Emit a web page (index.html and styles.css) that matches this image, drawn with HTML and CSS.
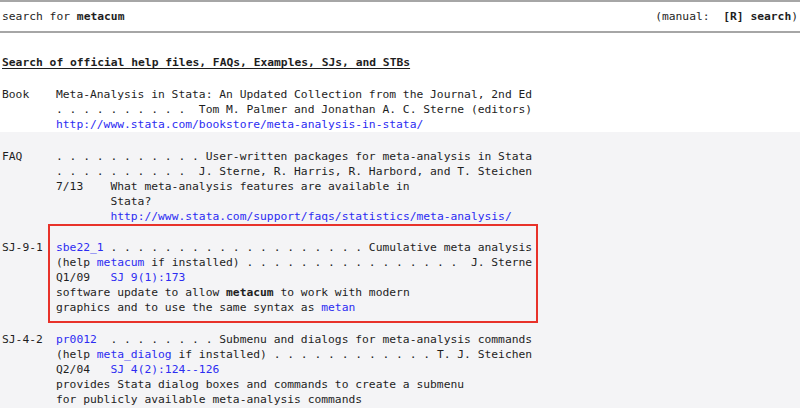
FILE: index.html
```html
<!DOCTYPE html>
<html lang="en">
<head>
<meta charset="utf-8">
<title>search for metacum</title>
<link rel="stylesheet" href="styles.css">
</head>
<body>
<div class="top">
  <header class="searchbar">
    <span class="ln">search for <b>metacum</b></span>
    <span class="ln">(manual:  <b>[R] search</b>)</span>
  </header>
  <h1 class="heading">Search of official help files, FAQs, Examples, SJs, and STBs</h1>
  <div class="entry">
    <div class="label">Book</div>
    <div class="body">
      <div class="ln">Meta-Analysis in Stata: An Updated Collection from the Journal, 2nd Ed</div>
      <div class="ln">. . . . . . . . . .  Tom M. Palmer and Jonathan A. C. Sterne (editors)</div>
      <div class="ln"><a href="#">http://www.stata.com/bookstore/meta-analysis-in-stata/</a></div>
    </div>
  </div>
</div>
<main class="rest">
  <div class="entry">
    <div class="label">FAQ</div>
    <div class="body">
      <div class="ln">. . . . . . . . . . . User-written packages for meta-analysis in Stata</div>
      <div class="ln">. . . . . . . . . .  J. Sterne, R. Harris, R. Harbord, and T. Steichen</div>
      <div class="ln">7/13    What meta-analysis features are available in</div>
      <div class="ln">        Stata?</div>
      <div class="ln">        <a href="#">http://www.stata.com/support/faqs/statistics/meta-analysis/</a></div>
    </div>
  </div>
  <div class="entry">
    <div class="label">SJ-9-1</div>
    <div class="body marked">
      <div class="ln"><a href="#">sbe22_1</a> . . . . . . . . . . . . . . . . . . . Cumulative meta analysis</div>
      <div class="ln">(help <a href="#">metacum</a> if installed) . . . . . . . . . . . . . . . .  J. Sterne</div>
      <div class="ln">Q1/09   <a href="#">SJ 9(1):173</a></div>
      <div class="ln">software update to allow <b>metacum</b> to work with modern</div>
      <div class="ln">graphics and to use the same syntax as <a href="#">metan</a></div>
    </div>
  </div>
  <div class="entry after-mark">
    <div class="label">SJ-4-2</div>
    <div class="body">
      <div class="ln"><a href="#">pr0012</a>  . . . . . . . . Submenu and dialogs for meta-analysis commands</div>
      <div class="ln">(help <a href="#">meta_dialog</a> if installed) . . . . . . . . . . . . T. J. Steichen</div>
      <div class="ln">Q2/04   <a href="#">SJ 4(2):124--126</a></div>
      <div class="ln">provides Stata dialog boxes and commands to create a submenu</div>
      <div class="ln">for publicly available meta-analysis commands</div>
    </div>
  </div>
</main>
</body>
</html>
```
FILE: styles.css
```css
html {
  background: #f4f4f6;
}

body {
  margin: 0;
  font-family: "DejaVu Sans Mono", "Liberation Mono", monospace;
  font-size: 11.3px;
  line-height: 15px;
  color: #1e1e1e;
}

b {
  font-weight: bold;
}

a {
  color: #2c2cf2;
  text-decoration: none;
}

.ln {
  white-space: pre;
}

.top {
  background: #ffffff;
}

.searchbar {
  display: flex;
  justify-content: space-between;
  padding: 7px 2px 7px 2px;
  border-top: 2px solid #a6a6a6;
  border-bottom: 2px solid #a6a6a6;
}

.heading {
  margin: 22px 0 17px 0;
  padding-left: 2px;
  font-size: inherit;
  font-weight: bold;
  line-height: 15px;
  text-decoration: underline;
  text-underline-offset: 2px;
}

.entry {
  display: grid;
  grid-template-columns: 54px 1fr;
  padding-left: 2px;
}

.rest {
  padding-top: 17px;
  display: flex;
  flex-direction: column;
  gap: 16px;
}

.after-mark {
  margin-top: 1px;
}

.body {
  position: relative;
}

.marked::before {
  content: "";
  position: absolute;
  top: -16px;
  left: -8px;
  width: 486px;
  bottom: -8px;
  border: 2px solid #e8322a;
  pointer-events: none;
}
```
